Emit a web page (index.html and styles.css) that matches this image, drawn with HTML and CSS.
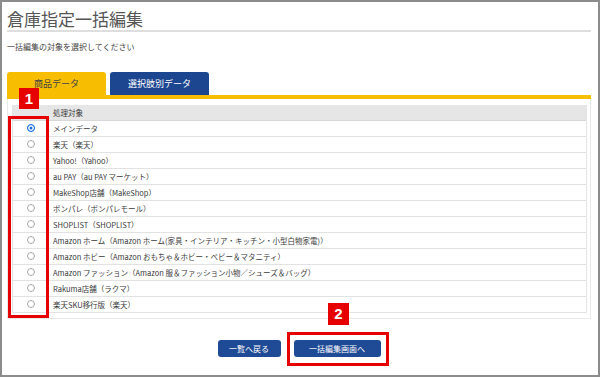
FILE: index.html
```html
<!DOCTYPE html>
<html lang="ja">

<head>
	<meta charset="utf-8">
	<title>倉庫指定一括編集</title>
	<link rel="stylesheet" href="styles.css">
</head>

<body>
	<div class="page">
		<h1 class="title">倉庫指定一括編集</h1>
		<p class="lead">一括編集の対象を選択してください</p>

		<div class="tabs">
			<div class="tab active">商品データ</div>
			<div class="tab">選択肢別データ</div>
		</div>

		<div class="panel">
			<table class="targets">
				<tr>
					<th class="sel"></th>
					<th>処理対象</th>
				</tr>
				<tr><td class="sel"><span class="radio checked"></span></td><td>メインデータ</td></tr>
				<tr><td class="sel"><span class="radio"></span></td><td>楽天（楽天）</td></tr>
				<tr><td class="sel"><span class="radio"></span></td><td>Yahoo!（Yahoo）</td></tr>
				<tr><td class="sel"><span class="radio"></span></td><td>au PAY（au PAY マーケット）</td></tr>
				<tr><td class="sel"><span class="radio"></span></td><td>MakeShop店舗（MakeShop）</td></tr>
				<tr><td class="sel"><span class="radio"></span></td><td>ポンパレ（ポンパレモール）</td></tr>
				<tr><td class="sel"><span class="radio"></span></td><td>SHOPLIST（SHOPLIST）</td></tr>
				<tr><td class="sel"><span class="radio"></span></td><td>Amazon ホーム（Amazon ホーム(家具・インテリア・キッチン・小型白物家電)）</td></tr>
				<tr><td class="sel"><span class="radio"></span></td><td>Amazon ホビー（Amazon おもちゃ＆ホビー・ベビー＆マタニティ）</td></tr>
				<tr><td class="sel"><span class="radio"></span></td><td>Amazon ファッション（Amazon 服＆ファッション小物／シューズ＆バッグ）</td></tr>
				<tr><td class="sel"><span class="radio"></span></td><td>Rakuma店舗（ラクマ）</td></tr>
				<tr><td class="sel"><span class="radio"></span></td><td>楽天SKU移行版（楽天）</td></tr>
			</table>
		</div>

		<div class="actions">
			<button class="btn back">一覧へ戻る</button>
			<button class="btn next">一括編集画面へ</button>
		</div>

		<!-- annotations -->
		<div class="mark box1"></div>
		<div class="num num1">1</div>
		<div class="mark box2"></div>
		<div class="num num2">2</div>
	</div>
</body>

</html>
```

FILE: styles.css
```css
* {
	margin: 0;
	padding: 0;
	box-sizing: border-box;
}

body {
	font-family: "Noto Sans CJK JP", "Noto Sans", sans-serif;
	color: #333;
	background: #fff;
}

.page {
	position: relative;
	width: 600px;
	height: 377px;
	border: 2px solid #8c8c8c;
	padding: 5px 7px 0 5px;
}

.title {
	height: 25px;
	font-size: 17px;
	line-height: 23px;
	font-weight: normal;
	color: #555;
	border-bottom: 2px solid #dedede;
}

.lead {
	margin-top: 9px;
	font-size: 8px;
	line-height: 12px;
	color: #444;
}

.tabs {
	display: flex;
	gap: 4px;
	margin-top: 19px;
	border-bottom: 4px solid #f7bd00;
}

.tab {
	width: 99px;
	height: 23px;
	line-height: 23px;
	text-align: center;
	font-size: 9px;
	border-radius: 3px 3px 0 0;
	background: #1d4690;
	color: #fff;
}

.tab.active {
	background: #f7bd00;
	color: #444;
}

.panel {
	border: 1px solid #e8e8e8;
	border-top: none;
	padding: 6px 3px 5px 4px;
}

.targets {
	width: 100%;
	border-collapse: separate;
	border-spacing: 0;
	border: 1px solid #e4e4e4;
	border-top: none;
	border-bottom: none;
	font-size: 7.5px;
	color: #3a3a3a;
}

.targets th,
.targets td {
	height: 15px;
	padding: 0 0 0 4px;
	text-align: left;
	font-weight: normal;
	line-height: 15px;
	border-bottom: 1px solid #e2e2e2;
	white-space: nowrap;
}

.targets th {
	background: #e6e6e6;
	border-bottom-color: #d8d8d8;
}

.targets .sel {
	width: 36px;
	padding: 0;
	text-align: center;
	border-right: 1px solid #e2e2e2;
}

.radio {
	display: inline-block;
	width: 8px;
	height: 8px;
	margin-top: 3px;
	vertical-align: top;
	border: 1px solid #a8a8a8;
	border-radius: 50%;
	background: #fff;
}

.radio.checked {
	border-color: #1a6fe0;
	background: #1a6fe0;
	box-shadow: inset 0 0 0 1.5px #fff;
}

.actions {
	display: flex;
	justify-content: center;
	gap: 13px;
	margin-top: 21px;
}

.btn {
	height: 17px;
	border: none;
	border-radius: 3px;
	background: #1f4b96;
	color: #fff;
	font-family: inherit;
	font-size: 8px;
	line-height: 17px;
}

.btn.back {
	width: 63px;
}

.btn.next {
	width: 87px;
}

.mark {
	position: absolute;
	border: 3px solid #e60000;
}

.box1 {
	left: 6px;
	top: 114px;
	width: 41px;
	height: 202px;
}

.box2 {
	left: 285px;
	top: 330px;
	width: 102px;
	height: 34px;
}

.num {
	position: absolute;
	width: 20px;
	height: 21px;
	background: #e60000;
	color: #fff;
	font-family: "Liberation Sans", sans-serif;
	font-weight: bold;
	font-size: 15px;
	line-height: 21px;
	text-align: center;
}

.num1 {
	left: 17px;
	top: 86px;
}

.num2 {
	left: 326px;
	top: 301px;
	width: 21px;
	height: 22px;
	line-height: 22px;
}
```
